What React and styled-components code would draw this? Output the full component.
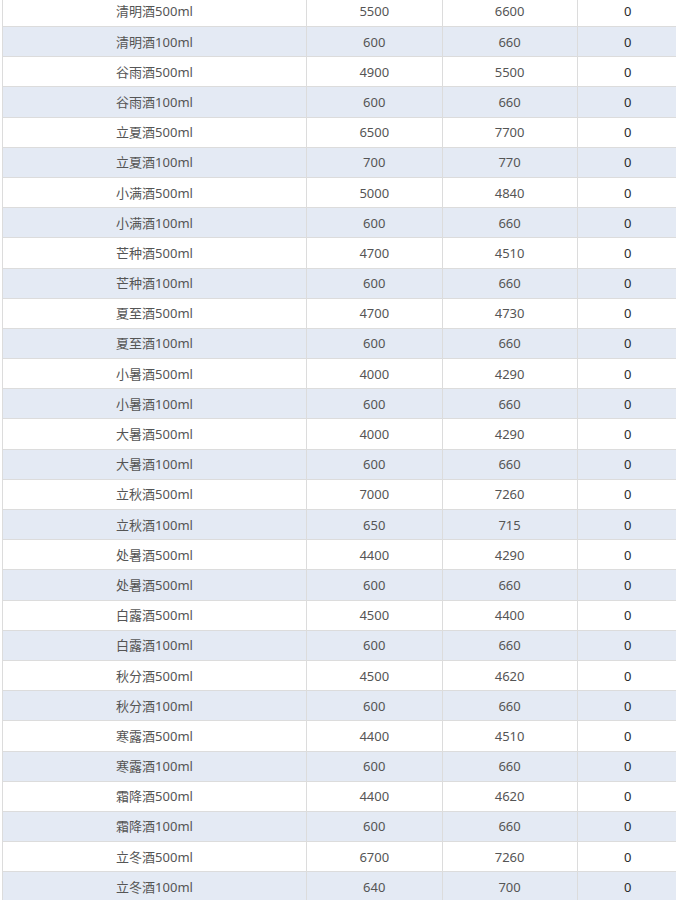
import React from "react";
import styled, { createGlobalStyle } from "styled-components";

const GlobalStyle = createGlobalStyle`
  html, body {
    margin: 0;
    padding: 0;
    background: #fff;
    overflow: hidden;
  }
  body {
    font-family: "Noto Sans", "Noto Sans CJK SC", sans-serif;
  }
`;

const Page = styled.div`
  width: 676px;
  height: 900px;
  overflow: hidden;
  padding-left: 2px;
  box-sizing: border-box;
`;

/* table is scrolled a little past its first row top */
const Scroller = styled.div`
  margin-top: -4.2px;
`;

const Table = styled.table`
  width: 676px;
  table-layout: fixed;
  border-collapse: collapse;
  font-size: 13px;
`;

const Row = styled.tr`
  height: 30.2px;
  background: ${(p) => (p.$striped ? "#e4eaf4" : "#fff")};
`;

const Cell = styled.td`
  border: 1px solid #dcdcdc;
  padding: 0 6px;
  text-align: center;
  vertical-align: middle;
  color: ${(p) => (p.$strong ? "#2a2a2a" : "#555")};
  white-space: nowrap;
  line-height: 18px;
`;

const rows = [
  ["清明酒500ml", 5500, 6600],
  ["清明酒100ml", 600, 660],
  ["谷雨酒500ml", 4900, 5500],
  ["谷雨酒100ml", 600, 660],
  ["立夏酒500ml", 6500, 7700],
  ["立夏酒100ml", 700, 770],
  ["小满酒500ml", 5000, 4840],
  ["小满酒100ml", 600, 660],
  ["芒种酒500ml", 4700, 4510],
  ["芒种酒100ml", 600, 660],
  ["夏至酒500ml", 4700, 4730],
  ["夏至酒100ml", 600, 660],
  ["小暑酒500ml", 4000, 4290],
  ["小暑酒100ml", 600, 660],
  ["大暑酒500ml", 4000, 4290],
  ["大暑酒100ml", 600, 660],
  ["立秋酒500ml", 7000, 7260],
  ["立秋酒100ml", 650, 715],
  ["处暑酒500ml", 4400, 4290],
  ["处暑酒500ml", 600, 660],
  ["白露酒500ml", 4500, 4400],
  ["白露酒100ml", 600, 660],
  ["秋分酒500ml", 4500, 4620],
  ["秋分酒100ml", 600, 660],
  ["寒露酒500ml", 4400, 4510],
  ["寒露酒100ml", 600, 660],
  ["霜降酒500ml", 4400, 4620],
  ["霜降酒100ml", 600, 660],
  ["立冬酒500ml", 6700, 7260],
  ["立冬酒100ml", 640, 700],
];

export default function App() {
  return (
    <Page>
      <GlobalStyle />
      <Scroller>
        <Table>
          <colgroup>
            <col style={{ width: 304 }} />
            <col style={{ width: 135.5 }} />
            <col style={{ width: 135.2 }} />
            <col style={{ width: 101.3 }} />
          </colgroup>
          <tbody>
            {rows.map(([name, a, b], i) => (
              <Row key={i} $striped={i % 2 === 1}>
                <Cell>{name}</Cell>
                <Cell>{a}</Cell>
                <Cell>{b}</Cell>
                <Cell $strong>0</Cell>
              </Row>
            ))}
          </tbody>
        </Table>
      </Scroller>
    </Page>
  );
}
